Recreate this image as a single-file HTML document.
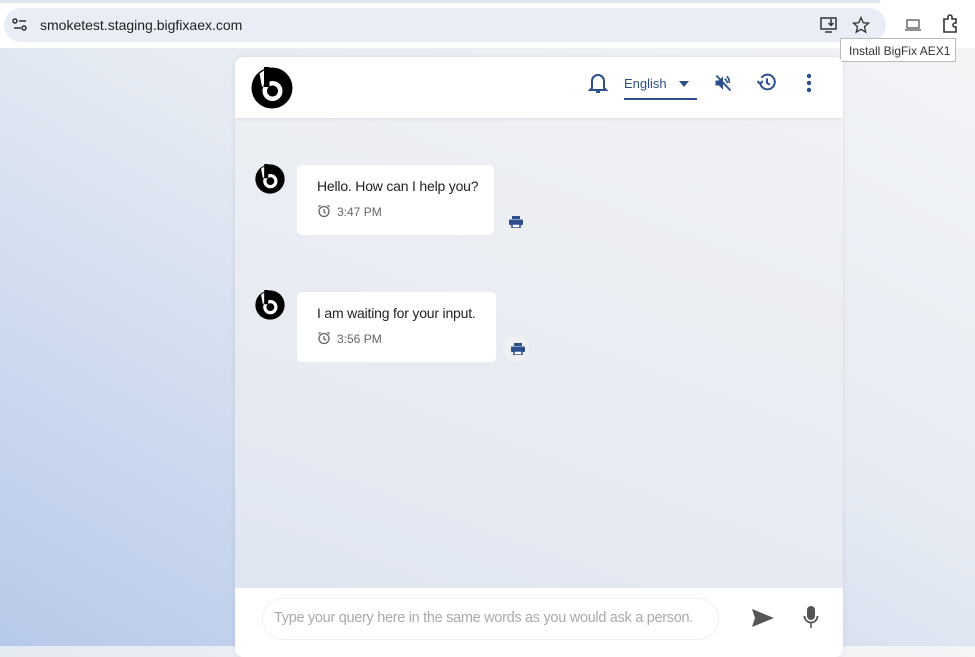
<!DOCTYPE html>
<html><head><meta charset="utf-8"><style>
*{margin:0;padding:0;box-sizing:border-box}
body{width:975px;height:646px;overflow:hidden;font-family:"Liberation Sans",sans-serif;position:relative;background:linear-gradient(210deg,#f4f5f7 0%,#e6ebf3 45%,#b7c9ea 100%)}
.top{position:absolute;left:0;top:0;width:975px;height:48px;background:#fff}
.top .line{position:absolute;left:0;top:0;width:880px;height:3px;background:#dfe6f3}
.addr{position:absolute;left:4px;top:8px;width:882px;height:34px;border-radius:17px;background:#e9eef6}
.addr .url{position:absolute;left:36px;top:9px;font-size:14px;color:#1f1f1f}
.tip{position:absolute;left:840px;top:38px;width:116px;height:24px;background:#fff;border:1px solid #bbb;font-size:12px;color:#333;padding:5px 0 0 8px}
.card{position:absolute;left:235px;top:57px;width:608px;height:600px;border-radius:8px;background:linear-gradient(200deg,#f1f2f5 0%,#e7ebf2 60%,#dde4f1 100%);overflow:hidden;box-shadow:0 0 6px rgba(0,0,0,.08)}
.hdr{position:absolute;left:0;top:0;width:608px;height:61px;background:#fff;box-shadow:0 1px 3px rgba(0,0,0,.08)}
.bub{position:absolute;background:#fff;border-radius:5px;font-size:14px;color:#222}
.bub .t{position:absolute;left:20px;top:13px;white-space:nowrap;letter-spacing:-0.2px}
.bub .tm{position:absolute;left:40px;top:40px;font-size:12px;color:#666}
.bub svg{position:absolute;left:20px;top:39px}
.ftr{position:absolute;left:0;top:531px;width:608px;height:80px;background:#fff}
.inp{position:absolute;left:27px;top:10px;width:457px;height:42px;border:1px solid #eef0f3;border-radius:21px;font-size:14.5px;letter-spacing:-0.3px;white-space:nowrap;color:#aaa;padding:11px 0 0 11px}
</style></head><body>
<svg width="0" height="0" style="position:absolute"><defs>
<symbol id="lg" viewBox="0 0 42 42"><circle cx="21" cy="21" r="20.5" fill="#000"/><circle cx="21.5" cy="24" r="10" fill="#fff"/><circle cx="21.5" cy="24" r="5.5" fill="#000"/><path d="M8.5 6.5 L13 3.5 L13 18 L11 20 Z" fill="#fff"/><rect x="13" y="0" width="5.5" height="20" fill="#000"/></symbol>
<symbol id="clk" viewBox="0 0 14 14"><circle cx="7" cy="7.5" r="5" fill="none" stroke="#666" stroke-width="1.3"/><path d="M7 5v3l2 1.2M1.5 3L3.5 1.2M12.5 3L10.5 1.2" fill="none" stroke="#666" stroke-width="1.3"/></symbol>
<symbol id="prn" viewBox="0 0 14 12"><rect x="3" y="0" width="8" height="3" fill="#2d4f8c"/><rect x="0" y="3.5" width="14" height="5.5" rx="1" fill="#2d4f8c"/><rect x="3" y="8" width="8" height="4" fill="#fff" stroke="#2d4f8c" stroke-width="1.5"/></symbol>
</defs></svg>
<div class="top"><div class="line"></div>
<div class="addr">
<svg style="position:absolute;left:8px;top:10px" width="16" height="14" viewBox="0 0 16 14" fill="none" stroke="#333" stroke-width="1.5"><circle cx="3" cy="3" r="2"/><line x1="7" y1="3" x2="14" y2="3"/><circle cx="12" cy="10" r="2"/><line x1="2" y1="10" x2="9" y2="10"/></svg>
<div class="url">smoketest.staging.bigfixaex.com</div>
<svg style="position:absolute;left:816px;top:8px" width="18" height="18" viewBox="0 0 18 18" fill="none" stroke="#333" stroke-width="1.5"><rect x="1" y="2" width="15" height="11"/><line x1="5" y1="16" x2="12" y2="16"/><path d="M11 3v6M8.5 7l2.5 2.5 2.5-2.5"/></svg>
<svg style="position:absolute;left:848px;top:8px" width="18" height="18" viewBox="0 0 24 24" fill="none" stroke="#333" stroke-width="1.8"><path d="M12 2l3 7 7 .6-5.3 4.6 1.6 7.3L12 17.8 5.7 21.5l1.6-7.3L2 9.6 9 9z"/></svg>
</div>
<svg style="position:absolute;left:904px;top:18px" width="18" height="14" viewBox="0 0 18 14" fill="none" stroke="#555" stroke-width="1.3"><rect x="3" y="2" width="12" height="8"/><line x1="1" y1="12" x2="17" y2="12"/></svg>
<svg style="position:absolute;left:941px;top:14px" width="20" height="20" viewBox="0 0 20 20" fill="none" stroke="#333" stroke-width="1.6"><path d="M3 5h4V3a2 2 0 014 0v2h4v4h-1a2 2 0 000 4h1v5H3z"/></svg>
</div>
<div class="tip">Install BigFix AEX1</div>

<div class="card">
<div class="hdr">
<svg style="position:absolute;left:16px;top:10px" width="42" height="42"><use href="#lg"/></svg>
<svg style="position:absolute;left:353px;top:15px" width="20" height="22" viewBox="0 0 20 22" fill="none" stroke="#2d4f8c" stroke-width="2"><path d="M4 16V9a6 6 0 0112 0v7l2 2H2z"/><path d="M8 20h4"/><path d="M10 2v1"/></svg>
<div style="position:absolute;left:389px;top:19px;font-size:13px;color:#2d4f8c">English</div>
<div style="position:absolute;left:444px;top:24px;border-left:5px solid transparent;border-right:5px solid transparent;border-top:6px solid #2d4f8c"></div>
<div style="position:absolute;left:389px;top:41px;width:73px;height:1.5px;background:#2d4f8c"></div>
<svg style="position:absolute;left:477px;top:16px" width="22" height="20" viewBox="0 0 24 24" fill="#2d4f8c"><path d="M3 9v6h4l5 5V4L7 9z"/><path d="M14 7a6 6 0 013 5M16.5 4a9 9 0 013 8" fill="none" stroke="#2d4f8c" stroke-width="2"/><path d="M4 3l17 18" stroke="#2d4f8c" stroke-width="2.2"/></svg>
<svg style="position:absolute;left:521px;top:14px" width="22" height="22" viewBox="0 0 24 24" fill="none" stroke="#2d4f8c" stroke-width="2.2"><path d="M4.5 12a8 8 0 108-8A8 8 0 006 7.5"/><path d="M1.5 11l3 3 3-3"/><path d="M12 8v5l3 2"/></svg>
<svg style="position:absolute;left:571px;top:16px" width="6" height="20" viewBox="0 0 6 20" fill="#2d4f8c"><circle cx="3" cy="3" r="2.2"/><circle cx="3" cy="10" r="2.2"/><circle cx="3" cy="17" r="2.2"/></svg>
</div>

<svg style="position:absolute;left:20px;top:107px" width="30" height="30"><use href="#lg"/></svg>
<div class="bub" style="left:62px;top:108px;width:197px;height:70px"><div class="t">Hello. How can I help you?</div><svg width="14" height="14"><use href="#clk"/></svg><div class="tm">3:47 PM</div></div>
<svg style="position:absolute;left:274px;top:159px" width="14" height="12"><use href="#prn"/></svg>

<svg style="position:absolute;left:20px;top:233px" width="30" height="30"><use href="#lg"/></svg>
<div class="bub" style="left:62px;top:235px;width:199px;height:70px"><div class="t">I am waiting for your input.</div><svg width="14" height="14"><use href="#clk"/></svg><div class="tm">3:56 PM</div></div>
<div style="position:absolute;left:268px;top:278px;width:26px;height:26px;border-radius:13px;background:#eef0f4"></div>
<svg style="position:absolute;left:276px;top:286px" width="14" height="12"><use href="#prn"/></svg>

<div class="ftr">
<div class="inp">Type your query here in the same words as you would ask a person.</div>
<svg style="position:absolute;left:516px;top:20px" width="24" height="20" viewBox="0 0 24 20" fill="#555"><path d="M1 1l22 9-22 9 3-9z"/></svg>
<svg style="position:absolute;left:568px;top:17px" width="16" height="24" viewBox="0 0 16 24" fill="#555"><rect x="4" y="1" width="8" height="14" rx="4"/><path d="M1.5 11a6.5 6.5 0 0013 0" fill="none" stroke="#555" stroke-width="1.8"/><rect x="7.2" y="17" width="1.6" height="6"/></svg>
</div>
</div>
</body></html>
